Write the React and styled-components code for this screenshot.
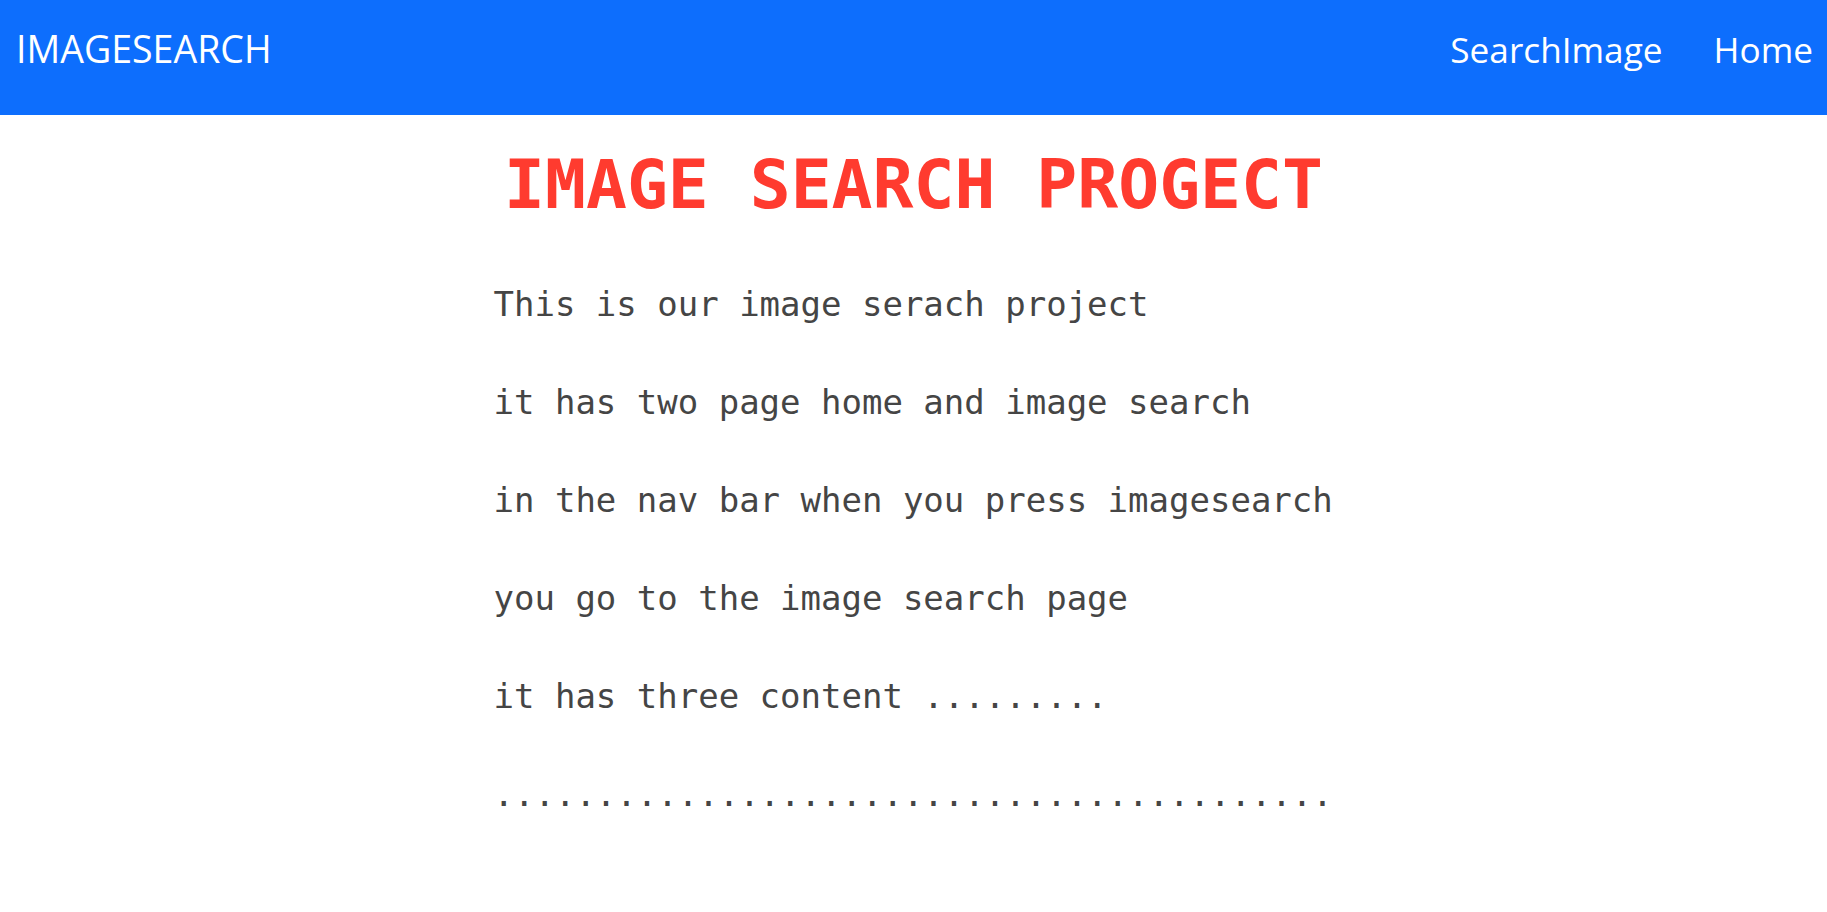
import React from "react";
import styled, { createGlobalStyle } from "styled-components";

const GlobalStyle = createGlobalStyle`
  html, body {
    margin: 0;
    padding: 0;
    background: #fff;
  }
`;

const Navbar = styled.nav`
  height: 115px;
  box-sizing: border-box;
  background: #0d6efd;
  display: flex;
  align-items: baseline;
  justify-content: space-between;
  padding: 30px 14px 0 16px;
  font-family: "Open Sans", "Noto Sans", sans-serif;
  color: #fff;
`;

const Brand = styled.a`
  font-size: 37.5px;
  line-height: 1;
  color: #fff;
  text-decoration: none;
`;

const NavLinks = styled.div`
  display: flex;
  align-items: baseline;
  gap: 51px;
`;

const NavLink = styled.a`
  font-size: 35.2px;
  line-height: 1;
  color: #fff;
  text-decoration: none;
`;

const Main = styled.main`
  width: 840px;
  margin: 0 auto;
  padding-top: 36px;
  font-family: "DejaVu Sans Mono", "Liberation Mono", monospace;
`;

const Title = styled.h1`
  margin: 0 0 36px;
  text-align: center;
  font-size: 68px;
  line-height: 68px;
  font-weight: 700;
  color: #ff3b2f;
  white-space: nowrap;
`;

const Line = styled.p`
  margin: 0;
  font-size: 34px;
  line-height: 98px;
  color: #454545;
  white-space: nowrap;
`;

const lines = [
  "This is our image serach project",
  "it has two page home and image search",
  "in the nav bar when you press imagesearch",
  "you go to the image search page",
  "it has three content .........",
  ".........................................",
];

const App = () => {
  return (
    <>
      <GlobalStyle />
      <Navbar>
        <Brand href="#">IMAGESEARCH</Brand>
        <NavLinks>
          <NavLink href="#">SearchImage</NavLink>
          <NavLink href="#">Home</NavLink>
        </NavLinks>
      </Navbar>
      <Main>
        <Title>IMAGE SEARCH PROGECT</Title>
        {lines.map((text, i) => (
          <Line key={i}>{text}</Line>
        ))}
      </Main>
    </>
  );
};

export default App;
